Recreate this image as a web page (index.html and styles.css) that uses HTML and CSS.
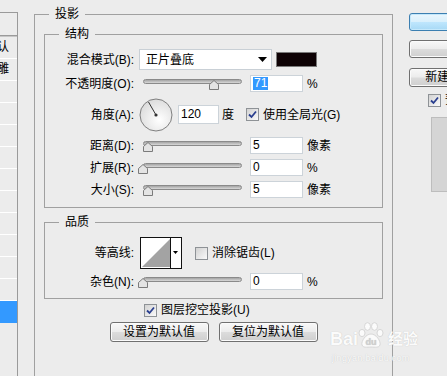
FILE: index.html
```html
<!DOCTYPE html>
<html lang="zh-CN">
<head>
    <meta charset="UTF-8">
    <title>图层样式 - 投影</title>
    <link rel="stylesheet" href="styles.css">
</head>
<body>
<div class="dialog">
    <div class="style-list">
        <div class="list-head"></div>
        <div class="list-items">
            <div class="list-item"><span>混合选项:默认</span></div>
            <div class="list-item"><span>斜面和浮雕</span></div>
            <div class="list-item"></div>
            <div class="list-item"></div>
            <div class="list-item"></div>
            <div class="list-item"></div>
            <div class="list-item"></div>
            <div class="list-item"></div>
            <div class="list-item"></div>
            <div class="list-item"></div>
            <div class="list-item"></div>
            <div class="list-item"></div>
            <div class="list-item selected"></div>
        </div>
    </div>

    <div class="main">
        <fieldset class="group outer">
            <legend>投影</legend>

            <fieldset class="group inner">
                <legend>结构</legend>
                <div class="row blend-row">
                    <span class="label">混合模式(B):</span>
                    <div class="select">
                        <span>正片叠底</span>
                        <svg width="9" height="5" viewBox="0 0 9 5"><polygon points="0,0 9,0 4.5,5" fill="#000"/></svg>
                    </div>
                    <span class="swatch"></span>
                </div>
                <div class="row">
                    <span class="label">不透明度(O):</span>
                    <div class="slider">
                        <div class="track"></div>
                        <svg class="thumb" style="left:71px" width="10" height="10" viewBox="0 0 10 10"><polygon points="0.5,4.5 5,0.5 9.5,4.5 9.5,9.5 0.5,9.5" fill="#e4e4e4" stroke="#7b7b7b"/></svg>
                    </div>
                    <span class="field"><span class="hl">71</span></span>
                    <span class="unit">%</span>
                </div>
                <div class="row angle-row">
                    <span class="label">角度(A):</span>
                    <svg class="dial" width="34" height="34" viewBox="0 0 34 34">
                        <defs>
                            <radialGradient id="dialFill" cx="0.6" cy="0.65" r="0.7">
                                <stop offset="0" stop-color="#ffffff"/>
                                <stop offset="1" stop-color="#dadada"/>
                            </radialGradient>
                        </defs>
                        <circle cx="17" cy="17" r="16" fill="url(#dialFill)" stroke="#7f7f7f"/>
                        <line x1="17" y1="17" x2="9.5" y2="4" stroke="#333" stroke-width="1"/>
                        <circle cx="17" cy="17" r="1.6" fill="#333"/>
                    </svg>
                    <span class="field angle-field">120</span>
                    <span class="unit deg">度</span>
                    <span class="check global-check"><svg width="9" height="9" viewBox="0 0 9 9"><polyline points="1,4.5 3.5,7 8,1.5" fill="none" stroke="#2a3f8f" stroke-width="1.8"/></svg></span>
                    <span class="check-text">使用全局光(G)</span>
                </div>
                <div class="row">
                    <span class="label">距离(D):</span>
                    <div class="slider">
                        <div class="track"></div>
                        <svg class="thumb" style="left:5px" width="10" height="10" viewBox="0 0 10 10"><polygon points="0.5,4.5 5,0.5 9.5,4.5 9.5,9.5 0.5,9.5" fill="#e4e4e4" stroke="#7b7b7b"/></svg>
                    </div>
                    <span class="field">5</span>
                    <span class="unit">像素</span>
                </div>
                <div class="row">
                    <span class="label">扩展(R):</span>
                    <div class="slider">
                        <div class="track"></div>
                        <svg class="thumb" style="left:0px" width="10" height="10" viewBox="0 0 10 10"><polygon points="0.5,4.5 5,0.5 9.5,4.5 9.5,9.5 0.5,9.5" fill="#e4e4e4" stroke="#7b7b7b"/></svg>
                    </div>
                    <span class="field">0</span>
                    <span class="unit">%</span>
                </div>
                <div class="row">
                    <span class="label">大小(S):</span>
                    <div class="slider">
                        <div class="track"></div>
                        <svg class="thumb" style="left:5px" width="10" height="10" viewBox="0 0 10 10"><polygon points="0.5,4.5 5,0.5 9.5,4.5 9.5,9.5 0.5,9.5" fill="#e4e4e4" stroke="#7b7b7b"/></svg>
                    </div>
                    <span class="field">5</span>
                    <span class="unit">像素</span>
                </div>
            </fieldset>

            <fieldset class="group inner quality">
                <legend>品质</legend>
                <div class="row contour-row">
                    <span class="label">等高线:</span>
                    <svg class="contour" width="42" height="32" viewBox="0 0 42 32">
                        <rect x="0.5" y="0.5" width="41" height="31" fill="#fff" stroke="#111"/>
                        <polygon points="2,30 30,2 30,30" fill="#a3a3a3"/>
                        <line x1="30.5" y1="0.5" x2="30.5" y2="31.5" stroke="#111"/>
                        <polygon points="33,14 38,14 35.5,17" fill="#000"/>
                    </svg>
                    <span class="check aa-check"></span>
                    <span class="check-text">消除锯齿(L)</span>
                </div>
                <div class="row noise-row">
                    <span class="label">杂色(N):</span>
                    <div class="slider">
                        <div class="track"></div>
                        <svg class="thumb" style="left:0px" width="10" height="10" viewBox="0 0 10 10"><polygon points="0.5,4.5 5,0.5 9.5,4.5 9.5,9.5 0.5,9.5" fill="#e4e4e4" stroke="#7b7b7b"/></svg>
                    </div>
                    <span class="field">0</span>
                    <span class="unit">%</span>
                </div>
            </fieldset>

            <div class="knockout">
                <span class="check"><svg width="9" height="9" viewBox="0 0 9 9"><polyline points="1,4.5 3.5,7 8,1.5" fill="none" stroke="#2a3f8f" stroke-width="1.8"/></svg></span>
                <span class="check-text">图层挖空投影(U)</span>
            </div>
            <div class="defaults">
                <div class="btn">设置为默认值</div>
                <div class="btn">复位为默认值</div>
            </div>
        </fieldset>
    </div>

    <div class="side">
        <div class="btn side-btn default">确定</div>
        <div class="btn side-btn">取消</div>
        <div class="btn side-btn new-btn">新建样式(W)...</div>
        <div class="preview-row">
            <span class="check"><svg width="9" height="9" viewBox="0 0 9 9"><polyline points="1,4.5 3.5,7 8,1.5" fill="none" stroke="#2a3f8f" stroke-width="1.8"/></svg></span>
            <span class="check-text">预览(V)</span>
        </div>
        <div class="preview"></div>
    </div>
</div>

<div class="watermark">
    <div class="wm-logo">
        <span class="wm-bai">Bai</span>
        <svg class="wm-paw" width="26" height="27" viewBox="0 0 26 27">
            <g fill="#fbfbfb" stroke="#cfcfcf" stroke-width="0.8">
                <ellipse cx="4" cy="11" rx="3" ry="3.6"/>
                <ellipse cx="9.5" cy="4.5" rx="3" ry="3.8"/>
                <ellipse cx="16.5" cy="4.5" rx="3" ry="3.8"/>
                <ellipse cx="22" cy="11" rx="3" ry="3.6"/>
                <path d="M13 12 C8 12 3 19 4 23 C5 26 9 25 13 25 C17 25 21 26 22 23 C23 19 18 12 13 12 Z"/>
            </g>
            <text x="13" y="23" text-anchor="middle" class="wm-du">du</text>
        </svg>
        <span class="wm-jy">经验</span>
    </div>
    <div class="wm-url">jingyan.baidu.com</div>
</div>
</body>
</html>
```

FILE: styles.css
```css
body {
    margin: 0;
    width: 447px;
    height: 376px;
    overflow: hidden;
    background: #ececec;
    color: #000;
    font-family: "Liberation Sans", "Noto Sans CJK SC", sans-serif;
    font-size: 12px;
    line-height: 14px;
}
.dialog {
    display: flex;
    align-items: flex-start;
}

/* style list on the left */
.style-list {
    flex-shrink: 0;
    width: 17px;
    height: 364px;
    margin-top: 12px;
    border-top: 1px solid #9a9a9a;
    border-right: 1px solid #9a9a9a;
}
.list-head {
    height: 22px;
    border-bottom: 1px solid #9a9a9a;
}
.list-items {
    border-top: 1px solid #c6c6c6;
}
.list-item {
    height: 21px;
    line-height: 21px;
    border-bottom: 1px solid #fff;
    padding-right: 8px;
    display: flex;
    justify-content: flex-end;
    overflow: hidden;
    white-space: nowrap;
}
.list-item.selected {
    background: #3399ff;
    border-bottom-color: #3399ff;
}

/* group boxes */
.main {
    flex-shrink: 0;
    width: 359px;
    margin-left: 16px;
    margin-top: 7px;
}
.group {
    margin: 0;
    padding: 0;
    min-width: 0;
    border: 1px solid #a0a0a0;
}
.group legend {
    padding: 0 6px;
    margin-left: 14px;
    line-height: 14px;
}
.outer {
    padding: 0 9px 60px;
}
.outer > legend {
    margin-left: 5px;
}
.inner {
    margin-top: 6px;
    padding: 8px 0 9px;
}
.inner.quality {
    margin-top: 7px;
    padding-bottom: 8px;
}

/* rows */
.row {
    display: flex;
    align-items: center;
    height: 17px;
    margin-top: 5px;
}
.row:first-of-type {
    margin-top: 0;
}
.blend-row {
    height: 21px;
}
.angle-row {
    height: 33px;
    margin: 6px 0;
}
.label {
    flex-shrink: 0;
    width: 89px;
    text-align: right;
}
.select {
    flex-shrink: 0;
    box-sizing: border-box;
    width: 133px;
    height: 21px;
    margin-left: 5px;
    padding: 0 4px 0 6px;
    display: flex;
    align-items: center;
    justify-content: space-between;
    background: #fff;
    border: 1px solid #c9d0d6;
}
.swatch {
    box-sizing: border-box;
    width: 41px;
    height: 15px;
    margin-left: 4px;
    background: #0e0205;
    border: 1px solid #7a7a7a;
}
.slider {
    position: relative;
    flex-shrink: 0;
    width: 108px;
    height: 17px;
    margin-left: 4px;
}
.track {
    box-sizing: border-box;
    width: 99px;
    height: 5px;
    margin: 4px 0 0 5px;
    border: 1px solid #8a8a8a;
    border-radius: 3px;
    background: linear-gradient(#a4a4a4, #d8d8d8);
}
.thumb {
    position: absolute;
    top: 5px;
}
.field {
    flex-shrink: 0;
    box-sizing: border-box;
    width: 53px;
    height: 17px;
    margin-left: 4px;
    padding-left: 2px;
    line-height: 15px;
    background: #fff;
    border: 1px solid #ccd3d9;
}
.hl {
    display: inline-block;
    padding: 0 1px;
    line-height: 13px;
    background: #3399ff;
    color: #fff;
}
.unit {
    margin-left: 4px;
}
.dial {
    flex-shrink: 0;
    margin-left: 5px;
}
.angle-field {
    width: 41px;
    height: 19px;
    line-height: 17px;
    margin-left: 5px;
}
.unit.deg {
    margin-left: 3px;
}
.check {
    flex-shrink: 0;
    box-sizing: border-box;
    width: 13px;
    height: 13px;
    display: inline-flex;
    align-items: center;
    justify-content: center;
    border: 1px solid #8e9296;
    background: linear-gradient(135deg, #d2d2d2, #fafafa);
}
.check-text {
    margin-left: 4px;
    white-space: nowrap;
}
.global-check {
    margin-left: 12px;
}

/* quality */
.contour-row {
    height: 32px;
}
.contour {
    flex-shrink: 0;
    margin-left: 6px;
}
.aa-check {
    margin-left: 13px;
}
.noise-row {
    margin-top: 4px;
}

.knockout {
    display: flex;
    align-items: center;
    height: 14px;
    margin-top: 4px;
    padding-left: 100px;
}
.defaults {
    display: flex;
    justify-content: center;
    gap: 10px;
    margin-top: 5px;
}
.btn {
    flex-shrink: 0;
    box-sizing: border-box;
    width: 99px;
    height: 20px;
    line-height: 18px;
    text-align: center;
    white-space: nowrap;
    border: 1px solid #707070;
    border-radius: 3px;
    background: linear-gradient(#f8f8f8 0%, #ececec 48%, #dcdcdc 52%, #cfcfcf 100%);
    box-shadow: inset 0 0 0 1px #fbfbfb;
}

/* right column */
.side {
    flex-shrink: 0;
    display: flex;
    flex-direction: column;
    align-items: flex-start;
    margin-left: 16px;
    margin-top: 13px;
}
.side-btn {
    width: 110px;
    height: 18px;
    line-height: 16px;
}
.side-btn + .side-btn {
    margin-top: 9px;
}
.side-btn.default {
    border-color: #3c7fb1;
    background: linear-gradient(#eaf6fd 0%, #d9f0fc 48%, #bee6fd 52%, #a7d9f5 100%);
    box-shadow: inset 0 0 0 1px #c4e8fb;
}
.side-btn.new-btn {
    height: 19px;
    margin-top: 10px;
}
.preview-row {
    display: flex;
    align-items: center;
    margin: 6px 0 0 19px;
}
.preview {
    width: 60px;
    height: 73px;
    margin: 10px 0 0 22px;
    background: #d5d5d5;
    border: 1px solid #bdbdbd;
}

/* baidu watermark */
.watermark {
    position: absolute;
    left: 330px;
    top: 322px;
    color: #fbfbfb;
    text-shadow: 0 0 1px #bdbdbd;
}
.wm-logo {
    display: flex;
    align-items: flex-end;
}
.wm-bai {
    font-family: "Liberation Sans", sans-serif;
    font-weight: bold;
    font-size: 18px;
    line-height: 20px;
}
.wm-du {
    font-family: "Liberation Sans", sans-serif;
    font-weight: bold;
    font-size: 9px;
    fill: #cfcfcf;
}
.wm-jy {
    margin-left: 4px;
    font-size: 15px;
    line-height: 20px;
    font-weight: bold;
}
.wm-url {
    margin-top: 4px;
    margin-left: 2px;
    font-size: 9px;
    line-height: 10px;
    letter-spacing: 0.3px;
}
```
